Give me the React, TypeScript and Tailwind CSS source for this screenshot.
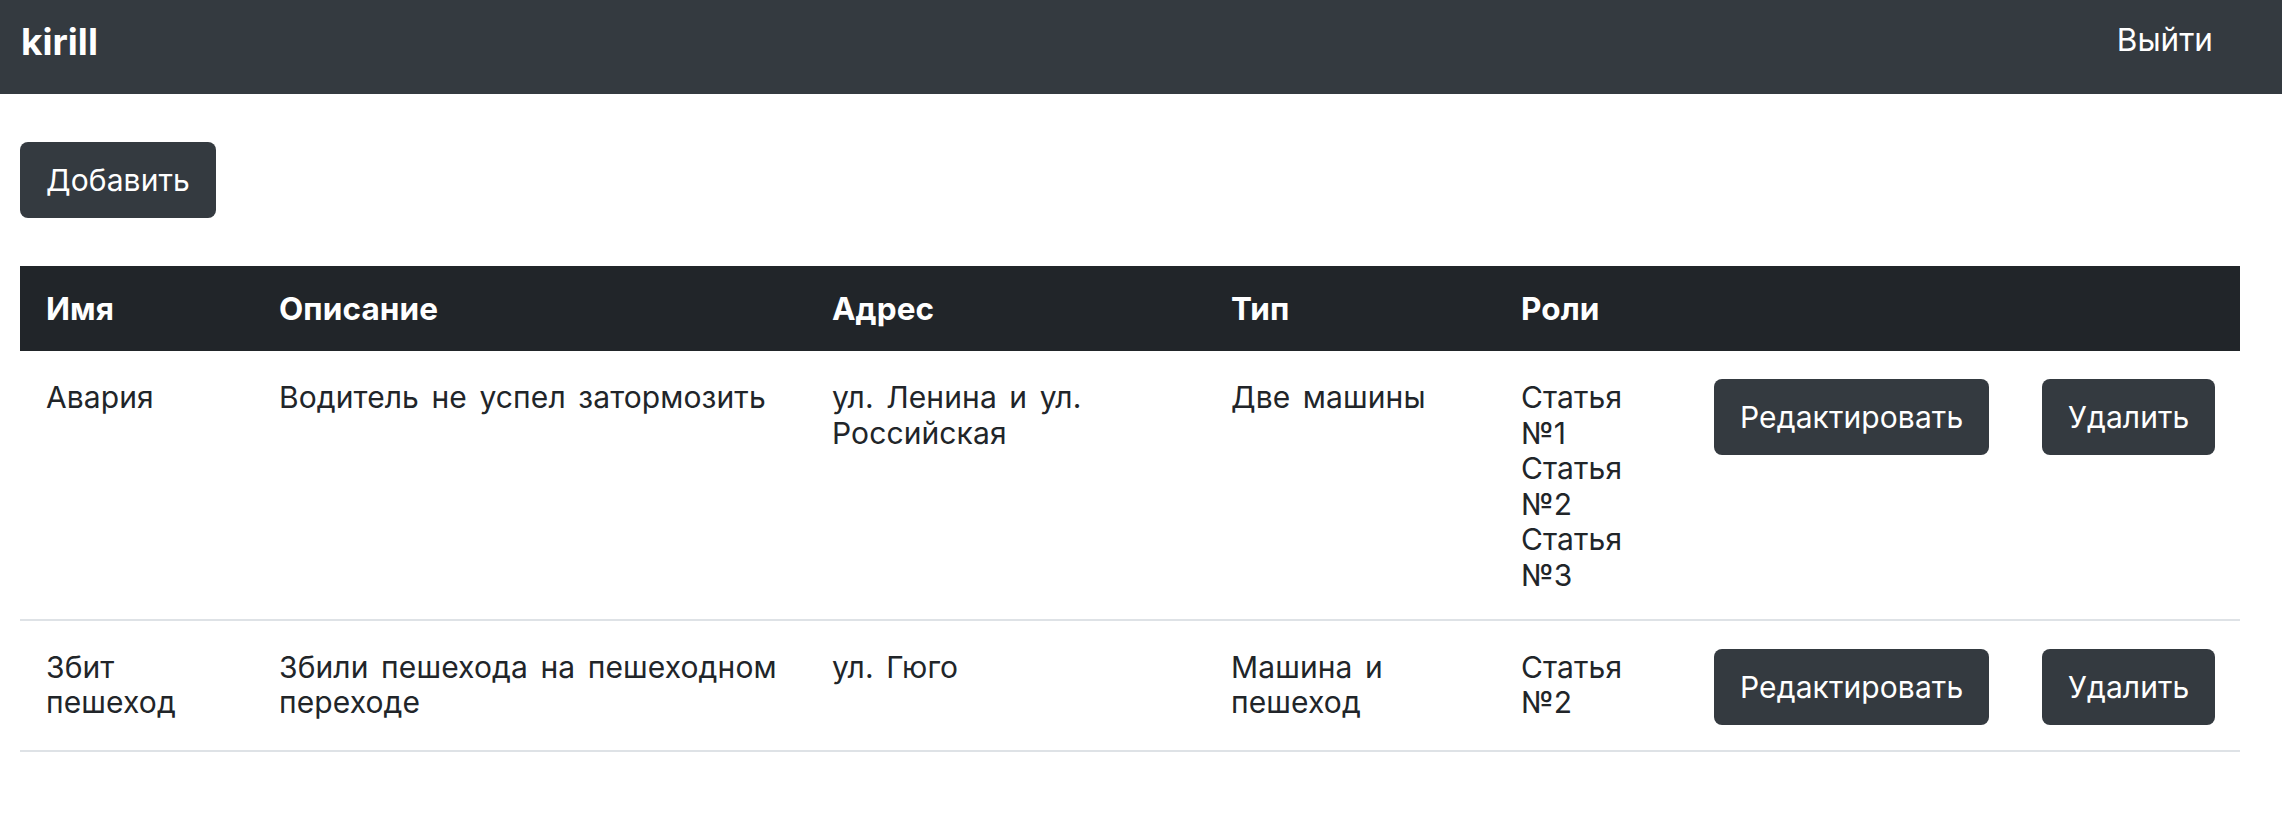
import React from "react";

type Incident = {
  name: string;
  description: string;
  address: string;
  type: string;
  roles: string[];
};

const incidents: Incident[] = [
  {
    name: "Авария",
    description: "Водитель не успел затормозить",
    address: "ул. Ленина и ул. Российская",
    type: "Две машины",
    roles: ["Статья №1", "Статья №2", "Статья №3"],
  },
  {
    name: "Збит пешеход",
    description: "Збили пешехода на пешеходном переходе",
    address: "ул. Гюго",
    type: "Машина и пешеход",
    roles: ["Статья №2"],
  },
];

const headers = ["Имя", "Описание", "Адрес", "Тип", "Роли", "", ""];

function DarkButton({ children }: { children: React.ReactNode }) {
  return (
    <button
      type="button"
      className="h-[76px] px-[26px] rounded-[8px] bg-[#343a40] text-white text-[30px] leading-[36px] tracking-[0.1px] whitespace-nowrap"
    >
      {children}
    </button>
  );
}

export default function App() {
  return (
    <div className="min-h-screen bg-white text-[#212529] font-['Inter','Liberation_Sans',sans-serif]">
      {/* navbar */}
      <header className="h-[94px] bg-[#343a40] flex items-center justify-between pl-[21px] pr-[69px]">
        <span className="text-white font-bold text-[37px] leading-none -mt-[12px]">kirill</span>
        <a className="text-white text-[31.5px] leading-none -mt-[15px]">Выйти</a>
      </header>

      <main className="pl-[20px] pr-[42px]">
        <div className="pt-[48px] pb-[48px]">
          <DarkButton>Добавить</DarkButton>
        </div>

        <table className="w-full table-fixed border-collapse text-[30px] leading-[35.6px] tracking-[0.1px] [word-spacing:4px]">
          <colgroup>
            <col className="w-[233px]" />
            <col className="w-[553px]" />
            <col className="w-[399px]" />
            <col className="w-[290px]" />
            <col className="w-[193px]" />
            <col className="w-[328px]" />
            <col />
          </colgroup>
          <thead>
            <tr className="bg-[#212529] text-white h-[85px]">
              {headers.map((h, i) => (
                <th key={i} className="px-[26px] text-left font-bold text-[31.5px] align-middle">
                  {h}
                </th>
              ))}
            </tr>
          </thead>
          <tbody>
            {incidents.map((it) => (
              <tr key={it.name} className="border-b-2 border-[#dee2e6] align-top">
                <td className="px-[26px] pt-[29px] pb-[25px]">{it.name}</td>
                <td className="pl-[26px] pr-[12px] pt-[29px] pb-[25px]">{it.description}</td>
                <td className="px-[26px] pt-[29px] pb-[25px]">{it.address}</td>
                <td className="px-[26px] pt-[29px] pb-[25px]">{it.type}</td>
                <td className="px-[26px] pt-[29px] pb-[25px]">
                  {it.roles.map((r) => (
                    <div key={r}>{r}</div>
                  ))}
                </td>
                <td className="pl-[26px] pt-[28px] pb-[25px]">
                  <DarkButton>Редактировать</DarkButton>
                </td>
                <td className="pl-[26px] pt-[28px] pb-[25px]">
                  <DarkButton>Удалить</DarkButton>
                </td>
              </tr>
            ))}
          </tbody>
        </table>
      </main>
    </div>
  );
}
